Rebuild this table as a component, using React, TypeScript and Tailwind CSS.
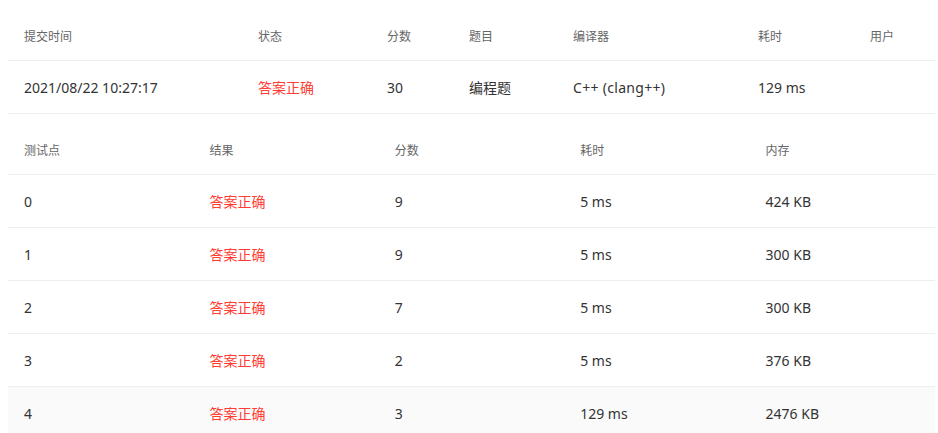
import React from "react";

const font = {
  fontFamily: '"Noto Sans", "Noto Sans CJK SC", sans-serif',
};

const subs = [
  ["0", "9", "5 ms", "424 KB"],
  ["1", "9", "5 ms", "300 KB"],
  ["2", "7", "5 ms", "300 KB"],
  ["3", "2", "5 ms", "376 KB"],
  ["4", "3", "129 ms", "2476 KB"],
];

export default function App() {
  const cols1 = "grid grid-cols-[234px_129px_82px_104px_185px_112px_1fr]";
  return (
    <div className="w-[938px] h-[433px] bg-white overflow-hidden pl-2 pr-[3px]" style={font}>
      <div className="mt-3">
        <div className={`${cols1} h-[49px] pt-[2px] items-center border-b border-[#eeeeee] text-[12px] text-[#666666]`}>
          {["提交时间", "状态", "分数", "题目", "编译器", "耗时", "用户"].map((t) => (
            <div key={t} className="pl-4">{t}</div>
          ))}
        </div>
        <div className={`${cols1} h-[53px] items-center border-b border-[#eeeeee] text-[14px] text-[#333333]`}>
          <div className="pl-4">2021/08/22 10:27:17</div>
          <div className="pl-4 text-[#ff3d33]">答案正确</div>
          <div className="pl-4">30</div>
          <div className="pl-4">编程题</div>
          <div className="pl-4 tracking-[0.3px]">C++ (clang++)</div>
          <div className="pl-4">129 ms</div>
          <div className="pl-4"></div>
        </div>
      </div>
      <div className="mt-3">
        <div className="grid grid-cols-5 h-[49px] pt-[2px] items-center border-b border-[#eeeeee] text-[12px] text-[#666666]">
          {["测试点", "结果", "分数", "耗时", "内存"].map((t) => (
            <div key={t} className="pl-4">{t}</div>
          ))}
        </div>
        {subs.map((r, i) => (
          <div
            key={r[0]}
            className={`grid grid-cols-5 h-[53px] items-center border-b border-[#eeeeee] text-[14px] text-[#333333] ${i === 4 ? "bg-[#fafafa]" : ""}`}
          >
            <div className="pl-4">{r[0]}</div>
            <div className="pl-4 text-[#ff3d33]">答案正确</div>
            <div className="pl-4">{r[1]}</div>
            <div className="pl-4">{r[2]}</div>
            <div className="pl-4">{r[3]}</div>
          </div>
        ))}
      </div>
    </div>
  );
}
